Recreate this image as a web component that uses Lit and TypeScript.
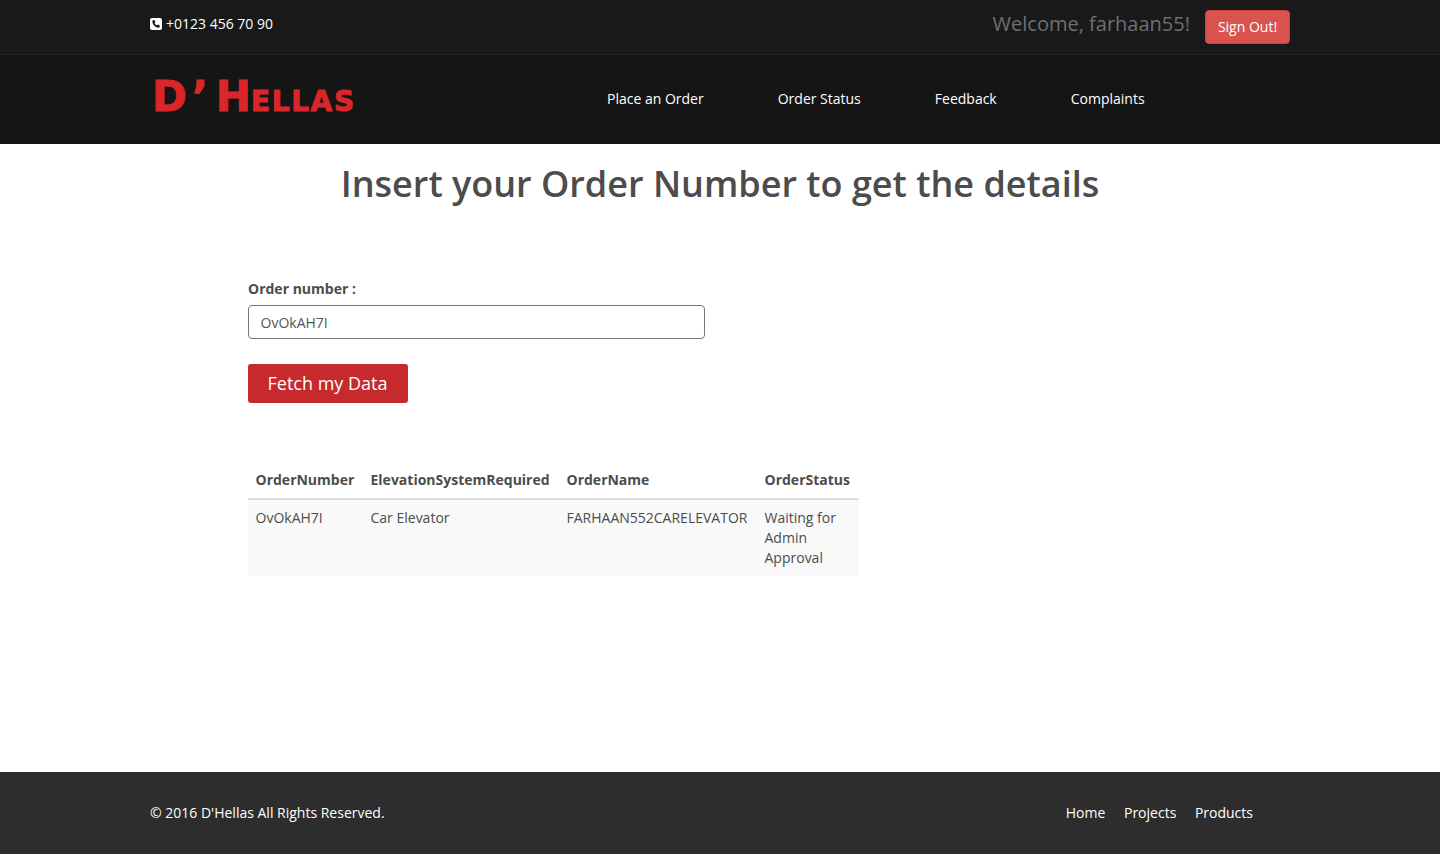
import { LitElement, html, css } from "lit";
import { customElement } from "lit/decorators.js";

@customElement("app-root")
class AppRoot extends LitElement {
  static styles = css`
    :host {
      display: flex;
      flex-direction: column;
      min-height: 854px;
      font-family: "Open Sans", sans-serif;
      font-size: 14px;
      line-height: 20px;
      color: #4c4c4c;
      background: #fff;
    }

    * {
      box-sizing: border-box;
    }

    .wrap {
      width: 1140px;
      margin: 0 auto;
      display: flex;
      align-items: center;
      justify-content: space-between;
    }

    .top {
      height: 55px;
      background: #191919;
      border-bottom: 1px solid #222;
      color: #fff;
    }

    .top .wrap {
      height: 54px;
      align-items: flex-start;
    }

    .phone {
      display: flex;
      align-items: center;
      gap: 4px;
      margin-top: 14px;
    }

    .phone svg {
      display: block;
    }

    .account {
      display: flex;
      align-items: flex-start;
      gap: 15px;
    }

    .welcome {
      font-size: 20px;
      line-height: 28px;
      color: #6f6f6f;
      margin-top: 10px;
    }

    .signout {
      height: 34px;
      width: 85px;
      margin-top: 10px;
      padding: 0;
      border: 1px solid #d43f3a;
      border-radius: 4px;
      background: #d9534f;
      color: #fff;
      font: 14px/20px "Open Sans", sans-serif;
    }

    .nav {
      height: 89px;
      background: #151515;
    }

    .nav .wrap {
      height: 89px;
      justify-content: flex-start;
    }

    .logo {
      width: 457px;
      padding: 0 0 0 2px;
      margin-top: -1px;
      font-family: "DejaVu Sans", sans-serif;
      font-weight: 700;
      color: #d9262a;
      font-size: 42px;
      line-height: 48px;
      white-space: nowrap;
      -webkit-text-stroke: 1px #d9262a;
    }

    .logo .mark {
      margin: 0 8px 0 5px;
    }

    .logo .small {
      font-size: 28px;
      letter-spacing: 1.6px;
    }

    .links {
      display: flex;
      gap: 74px;
      margin-top: -1px;
      color: #fff;
    }

    main {
      flex: 1;
    }

    h1 {
      margin: 0;
      padding: 20px 0 0;
      text-align: center;
      font-size: 36px;
      line-height: 40px;
      font-weight: 600;
      color: #4c4c4c;
    }

    .content {
      width: 944px;
      margin: 0 0 0 248px;
      padding-top: 75px;
    }

    label {
      display: block;
      font-weight: 700;
      margin-bottom: 6px;
    }

    input {
      display: block;
      width: 457px;
      height: 34px;
      padding: 0 11.5px;
      border: 1px solid #777;
      border-radius: 4px;
      background: #fff;
      color: #555;
      font: 14px/20px "Open Sans", sans-serif;
    }

    .fetch {
      display: block;
      width: 160px;
      height: 39px;
      margin-top: 25px;
      padding: 0 1px 2px 0;
      border: 0;
      border-radius: 3px;
      background: #c62a2d;
      color: #fff;
      font: 18px/24px "Open Sans", sans-serif;
    }

    table {
      width: 611px;
      margin-top: 58px;
      border-collapse: collapse;
      table-layout: fixed;
    }

    .c1 { width: 115px; }
    .c2 { width: 196px; }
    .c3 { width: 198px; }
    .c4 { width: 102px; }

    th,
    td {
      padding: 8px 8px 8px 7.5px;
      text-align: left;
      vertical-align: top;
    }

    th {
      font-weight: 700;
      border-bottom: 2px solid #ddd;
      padding-top: 9px;
      white-space: nowrap;
    }

    td {
      background: #f9f9f9;
    }

    footer {
      height: 82px;
      background: #2d2d2d;
      color: #fff;
    }

    footer .wrap {
      height: 82px;
    }

    .foot-links {
      display: flex;
      gap: 18.6px;
      margin-right: 37px;
    }
  `;

  render() {
    return html`
      <div class="top">
        <div class="wrap">
          <div class="phone">
            <svg width="12" height="12" viewBox="0 0 12 12">
              <rect width="12" height="12" rx="2" fill="#fff" />
              <path
                d="M3.1 2.2 4.4 2l1 2.1-.8.8c.4 1.1 1.3 2 2.4 2.5l.8-.8 2 1-.2 1.3c-.2.6-.9.9-1.5.8C5.3 9.3 2.8 6.8 2.4 3.7c-.1-.6.2-1.3.7-1.5z"
                fill="#191919"
              />
            </svg>
            <span>+0123 456 70 90</span>
          </div>
          <div class="account">
            <span class="welcome">Welcome, farhaan55!</span>
            <button class="signout">Sign Out!</button>
          </div>
        </div>
      </div>
      <div class="nav">
        <div class="wrap">
          <div class="logo">D<span class="mark">’</span>H<span class="small">ELLAS</span></div>
          <div class="links">
            <span>Place an Order</span>
            <span>Order Status</span>
            <span>Feedback</span>
            <span>Complaints</span>
          </div>
        </div>
      </div>
      <main>
        <h1>Insert your Order Number to get the details</h1>
        <div class="content">
          <label>Order number :</label>
          <input value="OvOkAH7I" />
          <button class="fetch">Fetch my Data</button>
          <table>
            <colgroup>
              <col class="c1" />
              <col class="c2" />
              <col class="c3" />
              <col class="c4" />
            </colgroup>
            <thead>
              <tr>
                <th>OrderNumber</th>
                <th>ElevationSystemRequired</th>
                <th>OrderName</th>
                <th>OrderStatus</th>
              </tr>
            </thead>
            <tbody>
              <tr>
                <td>OvOkAH7I</td>
                <td>Car Elevator</td>
                <td>FARHAAN552CARELEVATOR</td>
                <td>Waiting for Admin Approval</td>
              </tr>
            </tbody>
          </table>
        </div>
      </main>
      <footer>
        <div class="wrap">
          <span>© 2016 D'Hellas All Rights Reserved.</span>
          <div class="foot-links">
            <span>Home</span>
            <span>Projects</span>
            <span>Products</span>
          </div>
        </div>
      </footer>
    `;
  }
}

export { AppRoot };
